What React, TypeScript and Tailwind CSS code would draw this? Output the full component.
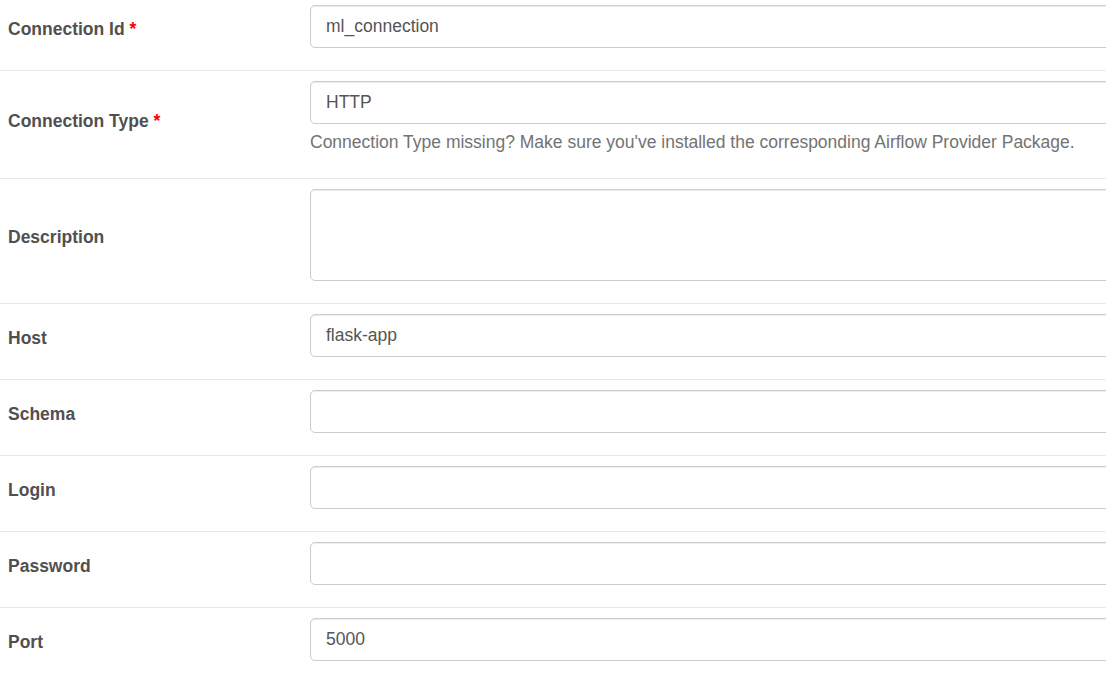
import { FC } from "react";

type Field = {
  label: string;
  value?: string;
  required?: boolean;
  help?: string;
  textarea?: boolean;
};

const fields: Field[] = [
  { label: "Connection Id", value: "ml_connection", required: true },
  {
    label: "Connection Type",
    value: "HTTP",
    required: true,
    help: "Connection Type missing? Make sure you've installed the corresponding Airflow Provider Package.",
  },
  { label: "Description", textarea: true },
  { label: "Host", value: "flask-app" },
  { label: "Schema" },
  { label: "Login" },
  { label: "Password" },
  { label: "Port", value: "5000" },
];

const inputCls =
  "block w-full h-[43px] px-[15px] rounded-[5px] border border-[#cccccc] bg-white text-[#555555] text-[17.5px] shadow-[inset_0_1px_1px_rgba(0,0,0,0.075)] outline-none";

const FormRow: FC<{ field: Field; first: boolean }> = ({ field, first }) => {
  return (
    <div
      className={
        "flex items-center " +
        (first ? "pt-[5px] pb-[10px]" : "border-t border-[#e8e8e8] py-[10px]")
      }
    >
      <div
        className={
          "w-[302px] shrink-0 pl-[8px] " + (field.textarea ? "mb-[8px]" : "mb-[6px]")
        }
      >
        <label className="font-bold text-[17.5px] leading-[25px] text-[#51504f]">
          {field.label}
          {field.required && <strong className="text-[#ff0000]"> *</strong>}
        </label>
      </div>
      <div className="flex-1 pl-[8px] pb-[12px]">
        {field.textarea ? (
          <textarea className={inputCls + " h-[92px] resize-none"} />
        ) : (
          <input className={inputCls} defaultValue={field.value ?? ""} />
        )}
        {field.help && (
          <p className="mt-[6px] mb-[1px] text-[17.5px] leading-[25px] text-[#737373]">
            {field.help}
          </p>
        )}
      </div>
    </div>
  );
};

export default function App() {
  return (
    <div
      className="w-full h-[681px] overflow-hidden bg-white"
      style={{ fontFamily: '"Liberation Sans", Arial, sans-serif' }}
    >
      <div className="w-[1220px]">
        {fields.map((f, i) => (
          <FormRow key={f.label} field={f} first={i === 0} />
        ))}
      </div>
    </div>
  );
}
